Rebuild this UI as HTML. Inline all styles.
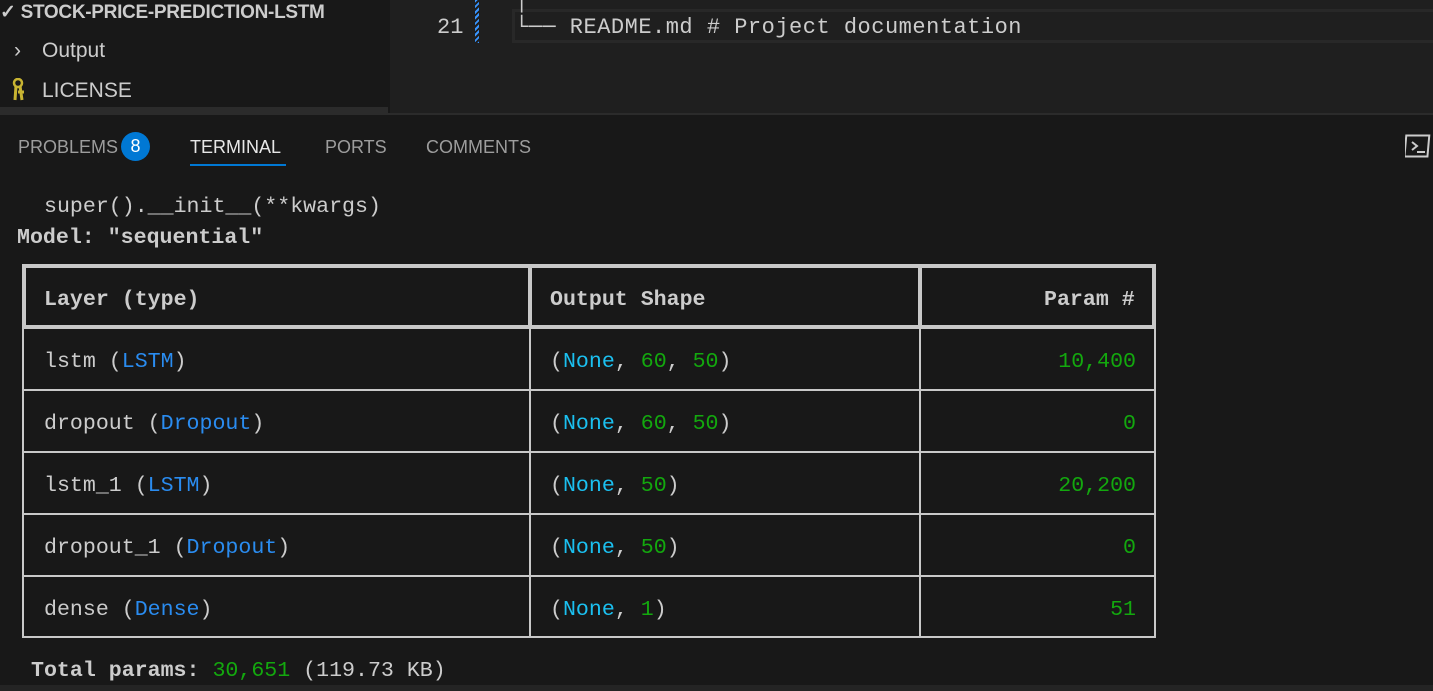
<!DOCTYPE html>
<html><head><meta charset="utf-8"><style>
*{margin:0;padding:0;box-sizing:border-box}
body{width:1433px;height:691px;background:#181818;overflow:hidden;position:relative;font-family:"Liberation Sans",sans-serif;color:#cccccc}
.a{position:absolute;white-space:pre}
.m{font-family:"Liberation Mono",monospace}
.c{color:#1bc0f0}.b{color:#2a8cf0}.g{color:#13a80e}
</style></head><body>
<div class="a" style="left:0;top:0;width:388px;height:113px;background:#181818"></div>
<div class="a" style="left:0;top:107px;width:388px;height:6px;background:#2b2b2b"></div>
<div class="a" style="left:0;top:1px;font-size:19px;font-weight:bold;color:#cccccc;letter-spacing:-0.3px">✓ STOCK-PRICE-PREDICTION-LSTM</div>
<div class="a" style="left:14px;top:39px;font-size:21px;color:#cccccc">›</div>
<div class="a" style="left:42px;top:39px;font-size:21px;color:#cccccc">Output</div>
<svg class="a" style="left:10px;top:78px" width="20" height="24" viewBox="0 0 20 24"><circle cx="8" cy="5" r="4" fill="none" stroke="#c8b432" stroke-width="2.5"/><path d="M6 8 L5 22 M10 8 L12 22 M8 14 L14 14" stroke="#c8b432" stroke-width="3"/></svg>
<div class="a" style="left:42px;top:79px;font-size:21px;color:#cccccc">LICENSE</div>
<div class="a" style="left:390px;top:0;width:1043px;height:113px;background:#1f1f1f"></div>
<div class="a" style="left:512px;top:9px;width:921px;height:34px;border:3px solid #282828;border-right:none"></div>
<div class="a" style="left:475px;top:0;width:4px;height:43px;background:repeating-linear-gradient(135deg,#3794ff 0 2px,transparent 2px 4px)"></div>
<div class="a m" style="left:437px;top:15px;font-size:22px;color:#cccccc">21</div>
<div class="a m" style="left:515px;top:15px;font-size:22px;color:#cccccc;letter-spacing:0.5px">└── README.md # Project documentation</div>
<div class="a m" style="left:515px;top:-12px;font-size:22px;color:#cccccc">│</div>
<div class="a" style="left:0;top:113px;width:1433px;height:2px;background:#2b2b2b"></div>
<div class="a" style="left:18px;top:137px;font-size:18px;color:#9d9d9d">PROBLEMS</div>
<div class="a" style="left:121px;top:132px;width:29px;height:29px;border-radius:50%;background:#0078d4;color:#fff;font-size:18px;text-align:center;line-height:29px">8</div>
<div class="a" style="left:190px;top:137px;font-size:18px;color:#e7e7e7">TERMINAL</div>
<div class="a" style="left:190px;top:164px;width:96px;height:2px;background:#0078d4"></div>
<div class="a" style="left:325px;top:137px;font-size:18px;color:#9d9d9d">PORTS</div>
<div class="a" style="left:426px;top:137px;font-size:18px;color:#9d9d9d">COMMENTS</div>
<svg class="a" style="left:1405px;top:133px" width="26" height="26" viewBox="0 0 26 26"><rect x="1.5" y="2.5" width="23" height="21" fill="none" stroke="#ccc" stroke-width="2" transform="skewX(-5)"/><path d="M7 9 L12 13 L7 17 M12 19 H20" stroke="#ccc" stroke-width="2" fill="none"/></svg>
<div class="a m" style="left:44px;top:195px;font-size:21.6px">super().__init__(**kwargs)</div>
<div class="a m" style="left:17px;top:226px;font-size:21.6px;font-weight:bold">Model: "sequential"</div>
<div class="a" style="left:22px;top:264px;width:1134px;height:374px;border:2px solid #c8c8c8"></div>
<div class="a" style="left:22px;top:264px;width:1134px;height:65px;border:4px solid #c8c8c8"></div>
<div class="a" style="left:528px;top:264px;width:4px;height:65px;background:#c8c8c8"></div>
<div class="a" style="left:918px;top:264px;width:4px;height:65px;background:#c8c8c8"></div>
<div class="a" style="left:529px;top:329px;width:2px;height:309px;background:#c8c8c8"></div>
<div class="a" style="left:919px;top:329px;width:2px;height:309px;background:#c8c8c8"></div>
<div class="a" style="left:22px;top:389px;width:1134px;height:2px;background:#c8c8c8"></div>
<div class="a" style="left:22px;top:451px;width:1134px;height:2px;background:#c8c8c8"></div>
<div class="a" style="left:22px;top:513px;width:1134px;height:2px;background:#c8c8c8"></div>
<div class="a" style="left:22px;top:575px;width:1134px;height:2px;background:#c8c8c8"></div>
<div class="a m" style="left:44px;top:288px;font-size:21.6px;font-weight:bold">Layer (type)</div>
<div class="a m" style="left:550px;top:288px;font-size:21.6px;font-weight:bold">Output Shape</div>
<div class="a m" style="left:1044px;top:288px;font-size:21.6px;font-weight:bold">Param #</div>

<div class="a m" style="left:44px;top:350px;font-size:21.6px">lstm (<span class="b">LSTM</span>)</div>
<div class="a m" style="left:550px;top:350px;font-size:21.6px">(<span class="c">None</span>, <span class="g">60</span>, <span class="g">50</span>)</div>
<div class="a m g" style="right:297px;top:350px;font-size:21.6px">10,400</div>

<div class="a m" style="left:44px;top:412px;font-size:21.6px">dropout (<span class="b">Dropout</span>)</div>
<div class="a m" style="left:550px;top:412px;font-size:21.6px">(<span class="c">None</span>, <span class="g">60</span>, <span class="g">50</span>)</div>
<div class="a m g" style="right:297px;top:412px;font-size:21.6px">0</div>

<div class="a m" style="left:44px;top:474px;font-size:21.6px">lstm_1 (<span class="b">LSTM</span>)</div>
<div class="a m" style="left:550px;top:474px;font-size:21.6px">(<span class="c">None</span>, <span class="g">50</span>)</div>
<div class="a m g" style="right:297px;top:474px;font-size:21.6px">20,200</div>

<div class="a m" style="left:44px;top:536px;font-size:21.6px">dropout_1 (<span class="b">Dropout</span>)</div>
<div class="a m" style="left:550px;top:536px;font-size:21.6px">(<span class="c">None</span>, <span class="g">50</span>)</div>
<div class="a m g" style="right:297px;top:536px;font-size:21.6px">0</div>

<div class="a m" style="left:44px;top:598px;font-size:21.6px">dense (<span class="b">Dense</span>)</div>
<div class="a m" style="left:550px;top:598px;font-size:21.6px">(<span class="c">None</span>, <span class="g">1</span>)</div>
<div class="a m g" style="right:297px;top:598px;font-size:21.6px">51</div>

<div class="a m" style="left:31px;top:659px;font-size:21.6px"><b>Total params:</b> <span class="g">30,651</span> (119.73 KB)</div>
<div class="a" style="left:0;top:685px;width:1433px;height:6px;background:#242424"></div>
</body></html>
